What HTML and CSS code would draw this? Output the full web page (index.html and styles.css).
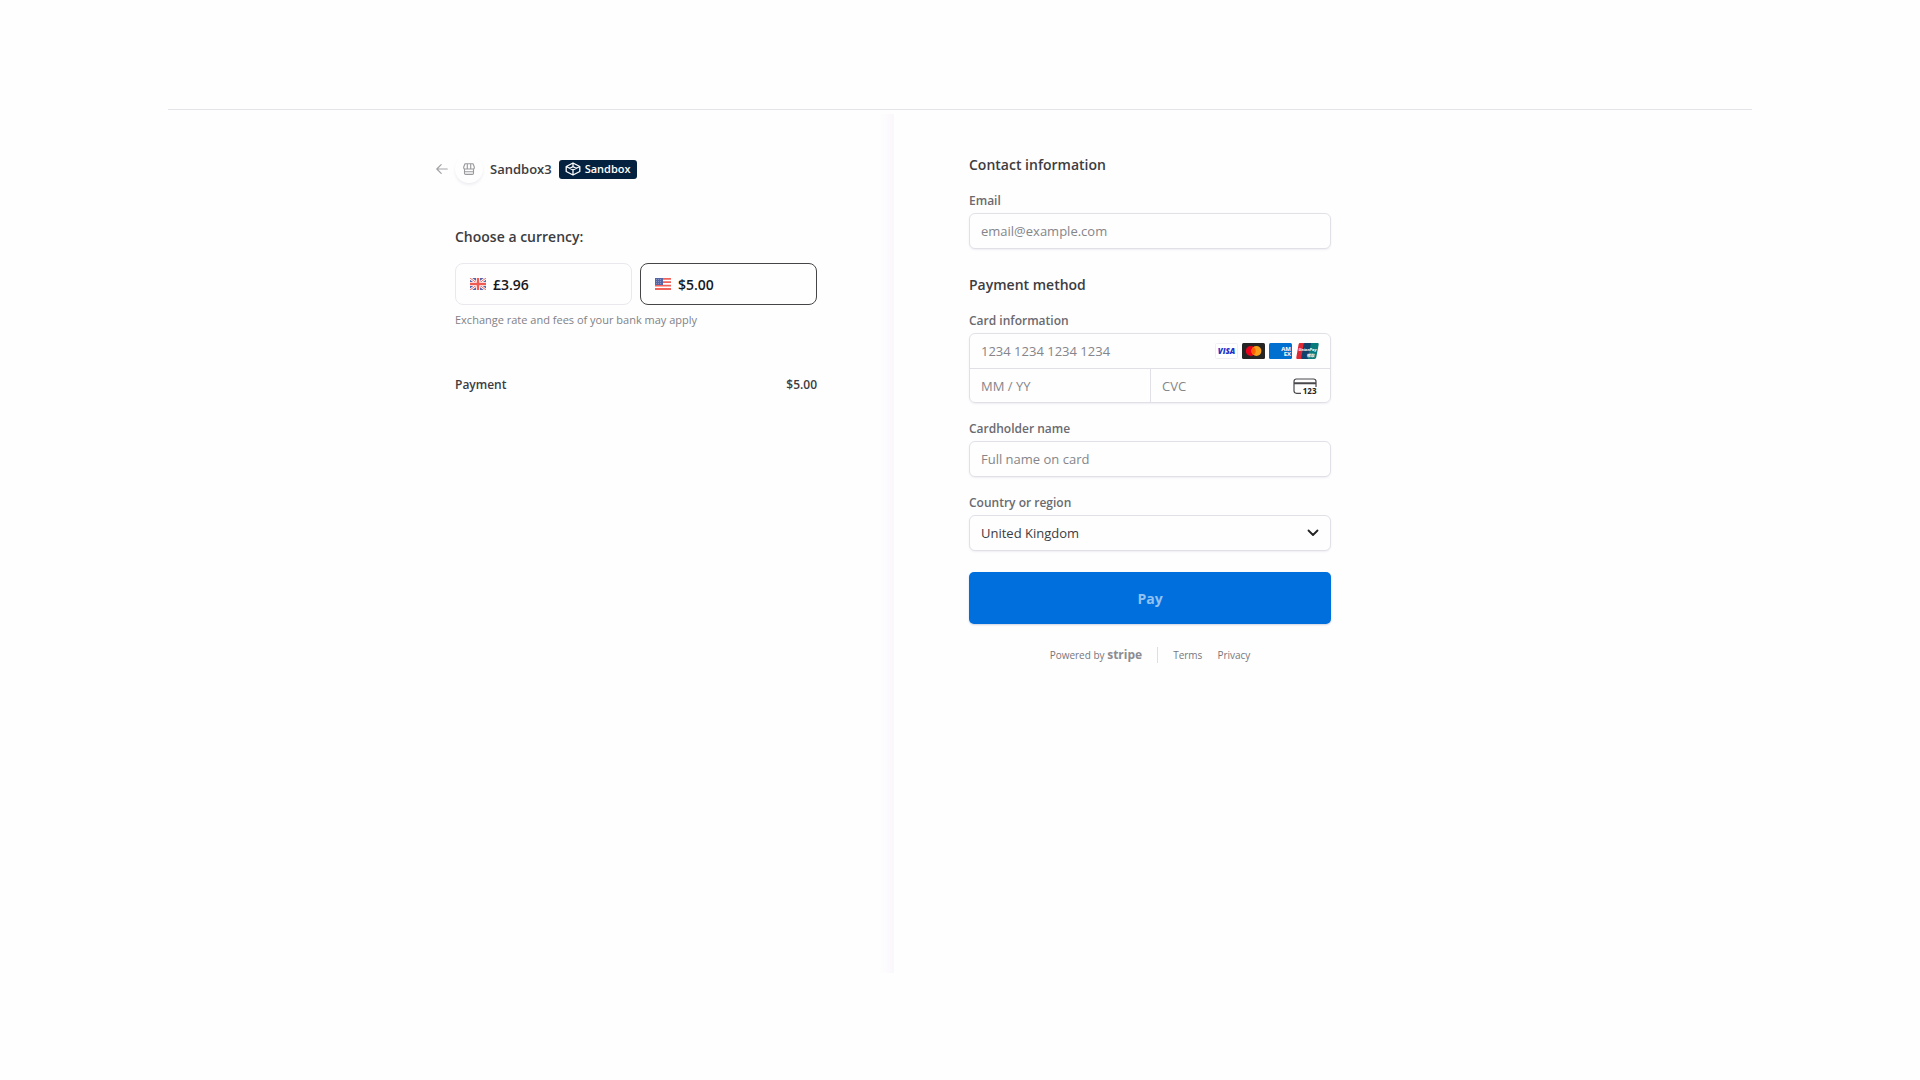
FILE: index.html
```html
<!DOCTYPE html>
<html lang="en">
<head>
    <meta charset="utf-8">
    <title>Sandbox3 Checkout</title>
    <meta name="viewport" content="width=device-width, initial-scale=1">
    <link rel="stylesheet" href="styles.css">
</head>
<body>
    <div class="checkout">
        <section class="summary">
            <header class="business">
                <a href="#" class="back" aria-label="Back">
                    <svg width="12" height="12" viewBox="0 0 12 12" fill="none" stroke="#a3a3a7" stroke-width="1.2" stroke-linecap="round" stroke-linejoin="round">
                        <path d="M11.2 6H1M5.2 1.6L.8 6l4.4 4.4"/>
                    </svg>
                </a>
                <span class="store-icon">
                    <svg width="12" height="12" viewBox="0 0 12 12" fill="none" stroke="#99999d" stroke-width="1.1" stroke-linejoin="round">
                        <path d="M2 .7h8l1.300 3.300v1q0 1-1.300 1h-8Q.7 6 .7 5V4zM4.300.8v5M7.700.8v5M1.500 6v4.200q0 1.200 1.200 1.200h6.600q1.200 0 1.200-1.200V6M1.500 8.800h9"/>
                    </svg>
                </span>
                <span class="business-name">Sandbox3</span>
                <span class="badge">
                    <svg width="16" height="14" viewBox="0 0 16 14" fill="none" stroke="#fff" stroke-width="1.3" stroke-linejoin="round">
                        <path d="M8 1l6.800 3.500v5L8 13 1.200 9.500v-5zM1.200 4.500L8 8l6.800-3.500M8 8v5M4.500 6.500L8 4.700l3.500 1.800M8 1v3.700"/>
                    </svg>
                    Sandbox
                </span>
            </header>

            <div class="summary-body">
                <h2>Choose a currency:</h2>
                <div class="currencies">
                    <button type="button" class="currency">
                        <svg width="16" height="12" viewBox="0 0 16 12">
                            <rect width="16" height="12" rx="1" fill="#5665a5"/>
                            <path d="M0 0l16 12M16 0L0 12" stroke="#fff" stroke-width="2.6"/>
                            <path d="M0 0l16 12M16 0L0 12" stroke="#ef5a52" stroke-width=".9"/>
                            <path d="M8 0v12M0 6h16" stroke="#fff" stroke-width="4"/>
                            <path d="M8 0v12M0 6h16" stroke="#ef5a52" stroke-width="2.4"/>
                        </svg>
                        £3.96
                    </button>
                    <button type="button" class="currency selected">
                        <svg width="16" height="12" viewBox="0 0 16 12">
                            <rect width="16" height="12" rx="1" fill="#fff"/>
                            <path d="M0 .8h16M0 4.200h16M0 7.600h16M0 11h16" stroke="#f0625a" stroke-width="1.8"/>
                            <rect width="8" height="7" fill="#5665a5"/>
                            <path d="M1 1.500h6M1 3.500h6M1 5.500h6" stroke="#aab2d6" stroke-width=".6" stroke-dasharray="1 1"/>
                        </svg>
                        $5.00
                    </button>
                </div>
                <p class="note">Exchange rate and fees of your bank may apply</p>
                <div class="line-item">
                    <span>Payment</span>
                    <span>$5.00</span>
                </div>
            </div>
        </section>

        <section class="payment">
            <form class="payment-form">
                <h2>Contact information</h2>
                <div class="form-group">
                    <label for="email">Email</label>
                    <input type="email" id="email" class="field" placeholder="email@example.com">
                </div>

                <h2 class="method-title">Payment method</h2>
                <div class="form-group">
                    <label for="cardNumber">Card information</label>
                    <div class="card-box">
                        <div class="card-row card-number">
                            <input type="text" id="cardNumber" placeholder="1234 1234 1234 1234">
                            <div class="brands">
                                <svg width="23" height="16" viewBox="0 0 23 16" role="img" aria-label="Visa">
                                    <rect x=".5" y=".5" width="22" height="15" rx="1" fill="#fff" stroke="#f0f0f4"/>
                                    <text x="11.5" y="11.3" class="visa">VISA</text>
                                </svg>
                                <svg width="23" height="16" viewBox="0 0 23 16" role="img" aria-label="Mastercard">
                                    <rect width="23" height="16" rx="1.5" fill="#252525"/>
                                    <circle cx="8.8" cy="8" r="5" fill="#eb001b"/>
                                    <circle cx="14.4" cy="8" r="5" fill="#f79e1b"/>
                                    <path d="M11.6 3.9a5 5 0 0 1 0 8.2 5 5 0 0 1 0-8.2z" fill="#ff5f00"/>
                                </svg>
                                <svg width="23" height="16" viewBox="0 0 23 16" role="img" aria-label="American Express">
                                    <rect width="23" height="16" rx="1.5" fill="#016fd0"/>
                                    <text x="22" y="7.5" class="amex">AM</text>
                                    <text x="22" y="13" class="amex">EX</text>
                                </svg>
                                <svg width="23" height="16" viewBox="0 0 23 16" role="img" aria-label="UnionPay">
                                    <path d="M4 0h7L8 16H1.500Q0 16 .3 14.500L2.600 1.200Q2.900 0 4 0z" fill="#df2a35"/>
                                    <path d="M9 0h7l-3 16H6.500Q5 16 5.300 14.500L7.600 1.200Q7.900 0 9 0z" fill="#10426b"/>
                                    <path d="M15 0h6.600q1.400 0 1.100 1.400l-2.500 13.200Q19.900 16 18.500 16h-6.700z" fill="#087b7d"/>
                                    <text x="11.500" y="8" class="unionpay">UnionPay</text>
                                    <text x="14.500" y="13.500" class="unionpay">银联</text>
                                </svg>
                            </div>
                        </div>
                        <div class="card-row card-details">
                            <input type="text" placeholder="MM / YY" aria-label="Expiration">
                            <div class="cvc">
                                <input type="text" placeholder="CVC" aria-label="CVC">
                                <svg width="24" height="17" viewBox="0 0 24 17" fill="none" stroke="#49494d" stroke-width="1.200">
                                    <path d="M8 15.300H3.500Q1 15.300 1 12.800V3.500Q1 1 3.500 1h17Q23 1 23 3.500V9"/>
                                    <path d="M1 5.300h22" stroke-width="2"/>
                                    <text x="23.500" y="16" class="cvc-digits">123</text>
                                </svg>
                            </div>
                        </div>
                    </div>
                </div>

                <div class="form-group">
                    <label for="name">Cardholder name</label>
                    <input type="text" id="name" class="field" placeholder="Full name on card">
                </div>

                <div class="form-group">
                    <label for="country">Country or region</label>
                    <div class="select-wrap">
                        <select id="country" class="field">
                            <option>United Kingdom</option>
                            <option>United States</option>
                        </select>
                        <svg class="chevron" width="12" height="8" viewBox="0 0 12 8" fill="none" stroke="#222" stroke-width="1.800" stroke-linecap="round" stroke-linejoin="round">
                            <path d="M1.500 1.500L6 6l4.500-4.500"/>
                        </svg>
                    </div>
                </div>

                <button type="submit" class="pay">Pay</button>
            </form>

            <footer class="footer">
                <a href="#" class="powered">Powered by <strong>stripe</strong></a>
                <a href="#">Terms</a>
                <a href="#">Privacy</a>
            </footer>
        </section>
    </div>
</body>
</html>
```
FILE: styles.css
```css
* {
    box-sizing: border-box;
}

body {
    margin: 0;
    padding: 109px 168px;
    background-color: #fefefe;
    color: #3c3c41;
    font-family: "Open Sans", "Noto Sans", sans-serif;
    font-size: 13px;
    line-height: 18px;
}

.checkout {
    display: grid;
    grid-template-columns: 11fr 13fr;
    min-height: 864px;
    border-top: 1px solid #e4e3ea;
}

h2 {
    margin: 0;
    font-size: 14px;
    font-weight: 600;
    line-height: 20px;
}

a {
    color: inherit;
    text-decoration: none;
}

button, input, select {
    font-family: inherit;
    font-size: 13px;
}

/* Order summary */
.summary {
    display: flex;
    flex-direction: column;
    align-items: flex-end;
    margin-top: 4px;
    padding: 41px 77px 0 0;
    background: linear-gradient(to left, #faf7fc, #fefefe 14px);
}

.business {
    display: flex;
    align-items: center;
    width: 100%;
    max-width: 381px;
    height: 28px;
}

.back {
    display: flex;
}

.store-icon {
    display: flex;
    align-items: center;
    justify-content: center;
    width: 28px;
    height: 28px;
    margin: 0 7px;
    border-radius: 50%;
    box-shadow: 0 2px 3px #eeecf2;
}

.business-name {
    margin-right: 7px;
    font-weight: 600;
}

.badge {
    display: flex;
    align-items: center;
    gap: 4px;
    height: 19px;
    padding: 0 6px;
    border-radius: 3px;
    background-color: #04223f;
    color: white;
    font-size: 11px;
    font-weight: 600;
}

.summary-body {
    width: 100%;
    max-width: 362px;
    margin-top: 44px;
}

.currencies {
    display: grid;
    grid-template-columns: 1fr 1fr;
    gap: 8px;
    margin-top: 16px;
}

.currency {
    display: flex;
    align-items: center;
    gap: 7px;
    height: 42px;
    padding: 0 14px;
    border: 1px solid #eae8ee;
    border-radius: 8px;
    background-color: #fefefe;
    color: #18181b;
    font-size: 14px;
    font-weight: 600;
    cursor: pointer;
}

.currency.selected {
    border-color: #454548;
}

.note {
    margin: 6px 0 0;
    color: #818186;
    font-size: 11px;
}

.line-item {
    display: flex;
    justify-content: space-between;
    margin-top: 47px;
    font-size: 12px;
    font-weight: 600;
}

/* Payment form */
.payment {
    padding: 45px 0 0 75px;
}

.payment-form, .footer {
    max-width: 362px;
}

.form-group {
    margin-top: 17px;
}

label {
    display: block;
    margin-bottom: 3px;
    color: #6a6a70;
    font-size: 12px;
    font-weight: 600;
}

.field {
    display: block;
    width: 100%;
    height: 36px;
    padding: 0 11px;
    border: 1px solid #e2e0e7;
    border-radius: 6px;
    background-color: #fefefe;
    color: #3c3c41;
    box-shadow: 0 1px 2px #efedf3;
}

::placeholder {
    color: #85858a;
    opacity: 1;
}

.method-title {
    margin-top: 26px;
}

.card-box {
    overflow: hidden;
    border: 1px solid #e2e0e7;
    border-radius: 6px;
    box-shadow: 0 1px 2px #efedf3;
}

.card-row {
    display: flex;
    align-items: center;
    height: 34px;
}

.card-row input {
    width: 100%;
    min-width: 0;
    height: 100%;
    padding: 0 11px;
    border: none;
    background: none;
}

.brands {
    display: flex;
    flex-shrink: 0;
    gap: 4px;
    margin-right: 11px;
}

.card-details {
    display: grid;
    grid-template-columns: 1fr 1fr;
    border-top: 1px solid #e2e0e7;
}

.cvc {
    display: flex;
    align-items: center;
    height: 34px;
    padding-right: 13px;
    border-left: 1px solid #e2e0e7;
}

.cvc svg {
    flex-shrink: 0;
}

.visa {
    fill: #1a31c8;
    font: italic 800 8px "Open Sans", sans-serif;
    text-anchor: middle;
}

.amex {
    fill: white;
    font: 700 6px "Open Sans", sans-serif;
    text-anchor: end;
}

.unionpay {
    fill: white;
    font: italic 700 4px "Open Sans", "Noto Sans CJK SC", sans-serif;
    text-anchor: middle;
}

.cvc-digits {
    fill: #222;
    stroke: none;
    font: 700 8px "Open Sans", sans-serif;
    text-anchor: end;
}

.select-wrap {
    position: relative;
}

.select-wrap select {
    appearance: none;
}

.chevron {
    position: absolute;
    top: 14px;
    right: 12px;
    pointer-events: none;
}

.pay {
    width: 100%;
    height: 52px;
    margin-top: 21px;
    border: none;
    border-radius: 5px;
    background-color: #006fde;
    color: #92c2f1;
    font-size: 14px;
    font-weight: 700;
    box-shadow: 0 1px 2px #cfd3e2;
    cursor: pointer;
}

.footer {
    display: flex;
    justify-content: center;
    gap: 15px;
    margin-top: 23px;
    color: #77777c;
    font-size: 10px;
    line-height: 16px;
}

.powered {
    padding-right: 15px;
    border-right: 1px solid #dedee3;
}

.powered strong {
    color: #8c8c92;
    font-size: 12px;
    font-weight: 700;
}
```
